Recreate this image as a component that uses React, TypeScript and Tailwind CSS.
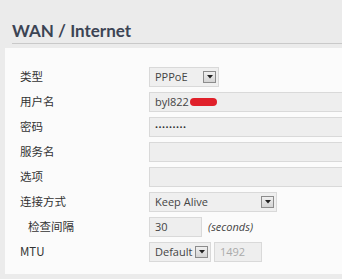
import React from 'react';

const latin = '"Open Sans", "Noto Sans CJK SC", sans-serif';

// little square drop-down button used by the selects
function DropButton() {
  return (
    <span className="flex h-[12px] w-[13px] items-center justify-center border border-[#8c8c8c] bg-gradient-to-b from-[#f0f0f0] to-[#d4d4d4]">
      <svg width="6" height="4" viewBox="0 0 6 4">
        <path d="M0 0 H6 L3 3.5 Z" fill="#222" />
      </svg>
    </span>
  );
}

function Select({ value, width }: { value: string; width: string }) {
  return (
    <div
      className={`flex h-[20px] ${width} items-center justify-between border border-[#d9d9d9] bg-[#efefef] pl-[5px] pr-[2px] text-[11px] text-[#444]`}
    >
      <span>{value}</span>
      <DropButton />
    </div>
  );
}

function Box({ children, width = 'w-[260px]', muted = false }: { children?: React.ReactNode; width?: string; muted?: boolean }) {
  return (
    <div
      className={`flex h-[20px] ${width} shrink-0 items-center border border-[#d9d9d9] bg-[#eeeeee] pl-[5px] text-[11px] ${muted ? 'text-[#aaaaaa]' : 'text-[#444]'}`}
    >
      {children}
    </div>
  );
}

const rows: { label: string; indent?: boolean; field: React.ReactNode }[] = [
  { label: '类型', field: <Select value="PPPoE" width="w-[70px]" /> },
  {
    label: '用户名',
    field: (
      <Box>
        byl822
        <span className="ml-[1px] inline-block h-[8px] w-[27px] rounded-full bg-[#e0202a]" />
      </Box>
    ),
  },
  {
    label: '密码',
    field: (
      <Box>
        <span className="text-[8px] tracking-[0.5px] text-[#333]">•••••••••</span>
      </Box>
    ),
  },
  { label: '服务名', field: <Box /> },
  { label: '选项', field: <Box /> },
  { label: '连接方式', field: <Select value="Keep Alive" width="w-[128px]" /> },
  {
    label: '检查间隔',
    indent: true,
    field: (
      <div className="flex items-center gap-[6px]">
        <Box width="w-[53px]">30</Box>
        <span className="text-[11px] italic text-[#444]">(seconds)</span>
      </div>
    ),
  },
  {
    label: 'MTU',
    field: (
      <div className="flex items-center gap-[3px]">
        <Select value="Default" width="w-[62px]" />
        <Box width="w-[48px]" muted>
          1492
        </Box>
      </div>
    ),
  },
];

export default function App() {
  return (
    <div className="h-[279px] w-[342px] overflow-hidden bg-[#ebebeb]" style={{ fontFamily: latin }}>
      <div className="h-[43px] pl-[12px] pt-[20px]">
        <h1 className="font-['Lato',sans-serif] text-[17px] font-bold leading-[21px] text-[#3c4454]">WAN / Internet</h1>
      </div>
      <div className="ml-[12px] h-[1px] bg-[#c9c9c9]" />
      <div className="ml-[5px] mt-[4px] flex h-[226px] w-[400px] flex-col gap-[5px] bg-[#fbfbfb] pt-[19px] pl-[15px]">
        {rows.map((row, i) => (
          <div key={i} className="flex items-center">
            <div
              className={`w-[129px] shrink-0 text-[11.5px] text-[#333] ${row.indent ? 'pl-[8px]' : ''}`}
              style={{ fontFamily: '"Noto Sans CJK SC", "Open Sans", sans-serif' }}
            >
              {row.label}
            </div>
            {row.field}
          </div>
        ))}
      </div>
    </div>
  );
}
